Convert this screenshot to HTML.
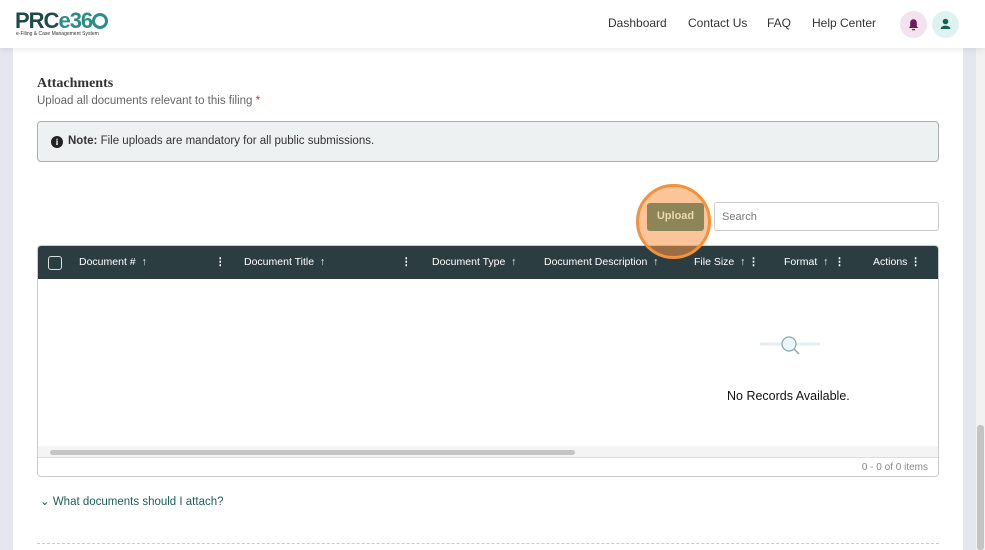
<!DOCTYPE html>
<html><head><meta charset="utf-8"><style>
*{box-sizing:border-box;margin:0;padding:0}
body{width:985px;height:550px;overflow:hidden;background:#fff;font-family:"Liberation Sans",sans-serif;position:relative;color:#333}
.lg{position:absolute;left:0;top:48px;width:13px;height:502px;background:#e4e8ee}
.rg{position:absolute;left:963px;top:48px;width:13px;height:502px;background:#e4e8ee}
.sb{position:absolute;left:976px;top:48px;width:9px;height:502px;background:#f2f2f2}
.sbt{position:absolute;left:977px;top:425px;width:7px;height:125px;background:#c4c4c4;border-radius:3px}
.hdr{position:absolute;left:0;top:0;width:985px;height:48px;background:#fff;box-shadow:0 2px 6px rgba(0,0,0,.08);z-index:2}
.logo{position:absolute;left:15px;top:8px;font-weight:bold;font-size:22px;color:#1e4a4a;letter-spacing:-1px}
.logo span{color:#2c8c86}
.tag{position:absolute;left:16px;top:31px;font-size:5px;color:#333}
.nav{position:absolute;top:16px;font-size:12px;color:#333}
.ic{position:absolute;top:11px;width:27px;height:27px;border-radius:50%}
h2{position:absolute;left:37px;top:76px;font-family:"Liberation Serif",serif;font-size:14px;font-weight:bold;color:#333}
.sub{position:absolute;left:37px;top:95px;font-size:11.5px;color:#666}
.note{position:absolute;left:37px;top:121px;width:902px;height:41px;background:#eef1f1;border:1px solid #a9b0b0;border-radius:4px;font-size:11.5px;padding:13px 0 0 30px;color:#333}
.note .i{position:absolute;left:13px;top:14px;width:12px;height:12px;border-radius:50%;background:#222;color:#fff;font-size:9px;font-weight:bold;text-align:center;line-height:12px;font-family:"Liberation Serif",serif}
.up{position:absolute;left:647px;top:203px;width:57px;height:28px;background:#8b8558;border-radius:3px;color:#e9d9b0;font-size:11px;font-weight:bold;text-align:center;line-height:27px}
.halo{position:absolute;left:636px;top:184px;width:75px;height:75px;border-radius:50%;background:rgba(250,150,70,.55);border:3px solid #f2923a}
.search{position:absolute;left:714px;top:202px;width:225px;height:29px;border:1px solid #ccc;border-radius:3px;font-size:11px;color:#777;padding:8px 0 0 7px}
.grid{position:absolute;left:37px;top:245px;width:902px;height:232px;border:1px solid #ccc;border-radius:4px;overflow:hidden}
.gh{height:33px;background:#2b3d41;position:relative;color:#fff;font-size:10.5px}
.gh div{position:absolute;top:10px}
.cb{position:absolute;left:10px;top:10px;width:14px;height:14px;border:1.5px solid #ddd;border-radius:3px}
.dots{font-weight:bold}
.gs{position:absolute;left:0;top:200px;width:900px;height:11px;background:#f4f4f4}
.gs b{position:absolute;left:12px;top:4px;width:525px;height:5px;background:#c4c4c4;border-radius:3px}
.gf{position:absolute;left:0;top:211px;width:900px;border-top:1px solid #ddd;height:20px;font-size:10px;color:#888;text-align:right;padding:4px 10px 0 0}
.nr{position:absolute;left:727px;top:389px;font-size:12.5px;color:#111}
.faq{position:absolute;left:40px;top:494px;font-size:11.5px;color:#1d5e58}
</style></head><body>
<div class="hdr">
<div class="logo">PRC<span>e36</span><span style="display:inline-block;width:16px;height:16px;border:3px solid #2c8c86;border-radius:50%;vertical-align:-1px"></span></div>
<div class="tag">e-Filing &amp; Case Management System</div>
<div class="nav" style="left:608px">Dashboard</div>
<div class="nav" style="left:688px">Contact Us</div>
<div class="nav" style="left:767px">FAQ</div>
<div class="nav" style="left:812px">Help Center</div>
<div class="ic" style="left:900px;background:#f2e3ee"><svg width="27" height="27"><path d="M9 17h9l-1.2-2v-3.5a3.3 3.3 0 0 0-6.6 0v3.5z M12 18h3v1.2h-3z" fill="#6b1e5a"/></svg></div>
<div class="ic" style="left:932px;background:#dff2f2"><svg width="27" height="27"><circle cx="13.5" cy="10.5" r="2.8" fill="#16605a"/><path d="M8.5 18a5 3.4 0 0 1 10 0z" fill="#16605a"/></svg></div>
</div>
<div class="lg"></div><div class="rg"></div><div class="sb"></div><div class="sbt"></div>
<h2>Attachments</h2>
<div class="sub">Upload all documents relevant to this filing <span style="color:#c33">*</span></div>
<div class="note"><span class="i">i</span><b>Note:</b> File uploads are mandatory for all public submissions.</div>
<div class="search">Search</div>
<div class="grid">
<div class="gh">
<span class="cb"></span>
<div style="left:41px">Document # &nbsp;↑</div><div class="dots" style="left:177px">⋮</div>
<div style="left:206px">Document Title &nbsp;↑</div><div class="dots" style="left:363px">⋮</div>
<div style="left:394px">Document Type &nbsp;↑</div>
<div style="left:506px">Document Description &nbsp;↑</div>
<div style="left:656px">File Size &nbsp;↑ <b>⋮</b></div>
<div style="left:746px">Format &nbsp;↑ &nbsp;<b>⋮</b></div>
<div style="left:835px">Actions <b>⋮</b></div>
</div>
<svg style="position:absolute;left:722px;top:88px" width="60" height="26"><line x1="0" y1="10" x2="60" y2="10" stroke="#e6eef2" stroke-width="3"/><circle cx="29" cy="10" r="7" fill="#eef6fa" stroke="#8aa" stroke-width="1.2"/><line x1="34" y1="15" x2="39" y2="20" stroke="#8aa" stroke-width="1.5"/></svg>
<div class="gs"><b></b></div>
<div class="gf">0 - 0 of 0 items</div>
</div>
<div class="nr">No Records Available.</div>
<div class="halo"></div>
<div class="up">Upload</div>
<div class="faq">⌄ What documents should I attach?</div>
<div style="position:absolute;left:37px;top:543px;width:902px;border-top:1px dashed #ccc"></div>
</body></html>
